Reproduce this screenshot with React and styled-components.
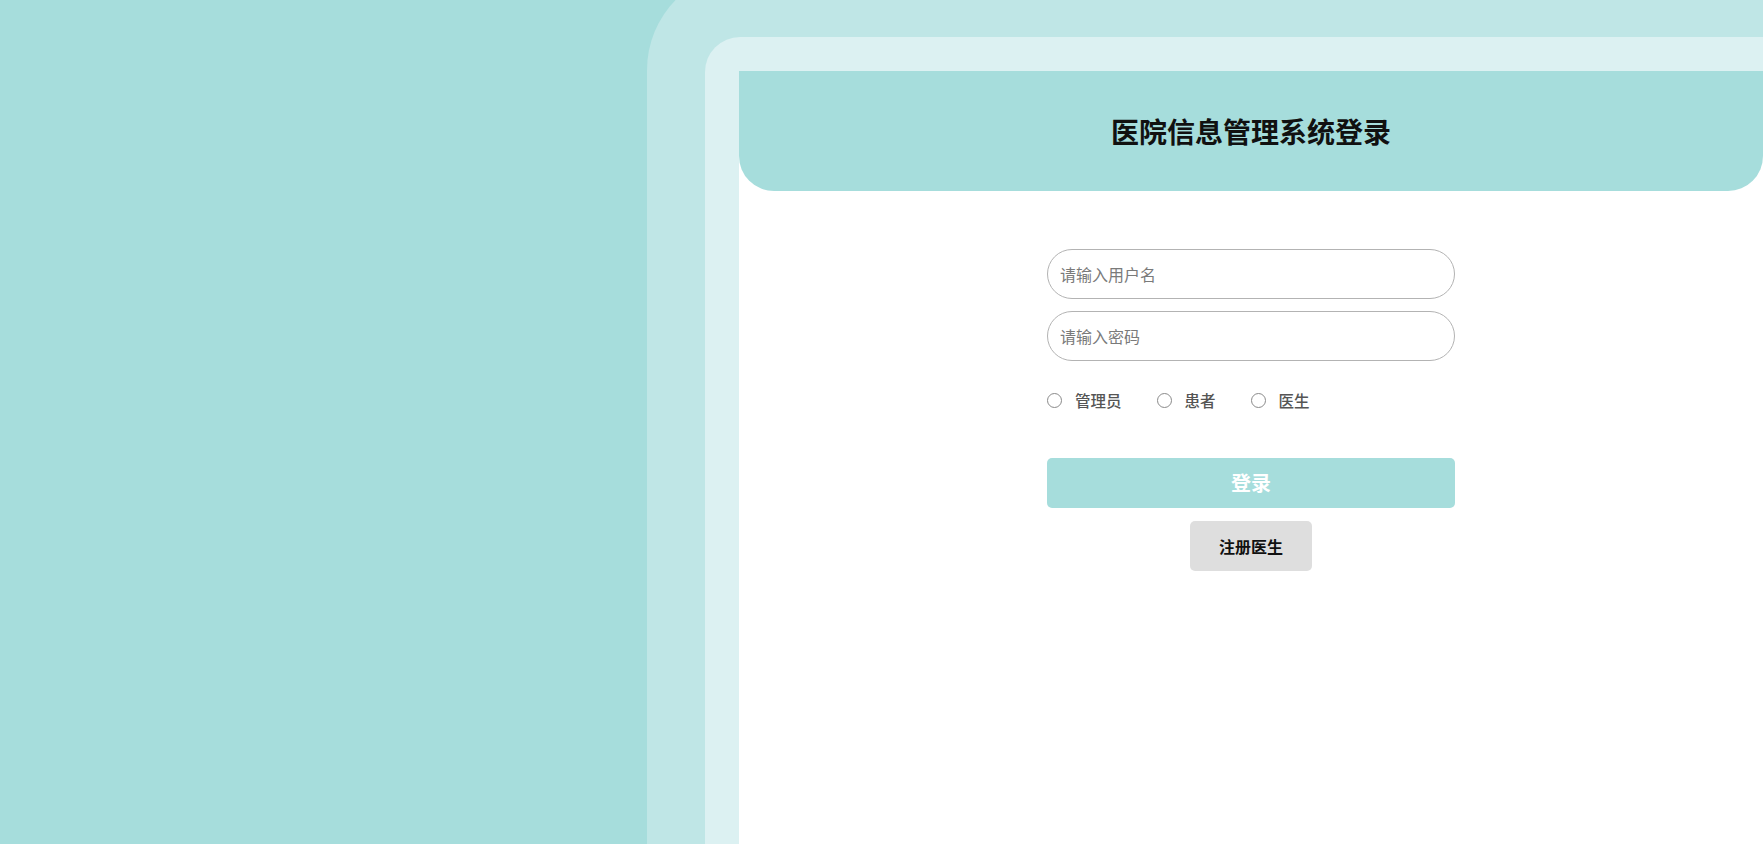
import React from 'react';
import styled, { createGlobalStyle } from 'styled-components';

const GlobalStyle = createGlobalStyle`
  html, body {
    margin: 0;
    height: 100%;
    overflow: hidden;
  }
  body {
    background: #a6dddc;
    font-family: "Noto Sans CJK SC", "Noto Sans", sans-serif;
  }
  * {
    box-sizing: border-box;
  }
`;

const Page = styled.div`
  display: grid;
  grid-template-columns: 647px 1fr;
  height: 100vh;
`;

const OuterBand = styled.div`
  margin-top: -30px;
  padding: 67px 0 0 58px;
  background: #bfe6e6;
  border-top-left-radius: 100px;
  display: flex;
`;

const InnerBand = styled.div`
  flex: 1;
  display: flex;
  padding: 34px 0 0 34px;
  background: #dcf1f2;
  border-top-left-radius: 35px;
`;

const Card = styled.div`
  flex: 1;
  background: #fff;
`;

const Header = styled.div`
  height: 120px;
  display: flex;
  align-items: center;
  justify-content: center;
  background: #a6dddc;
  border-radius: 0 0 35px 35px;
`;

const Title = styled.h1`
  margin: 0;
  font-size: 28px;
  font-weight: 700;
  color: #111;
`;

const Form = styled.form`
  width: 408px;
  margin: 58px auto 0;
  display: flex;
  flex-direction: column;
`;

const Field = styled.input`
  height: 50px;
  margin-bottom: 12px;
  padding: 0 12px;
  border: 1px solid #b3b3b3;
  border-radius: 25px;
  font-family: inherit;
  font-size: 16px;
  outline: none;
  &::placeholder {
    color: #7a7a7a;
  }
`;

const RoleRow = styled.div`
  display: flex;
  align-items: center;
  gap: 35px;
  margin-top: 16px;
  height: 22px;
`;

const RoleLabel = styled.label`
  display: flex;
  align-items: center;
  gap: 13px;
  font-size: 15.5px;
  font-weight: 500;
  color: #555;
`;

const Radio = styled.input`
  appearance: none;
  width: 15px;
  height: 15px;
  margin: 0;
  border: 1px solid #8a8a8a;
  border-radius: 50%;
  background: #fff;
`;

const LoginButton = styled.button`
  height: 50px;
  margin-top: 47px;
  padding-bottom: 3px;
  border: none;
  border-radius: 5px;
  background: #a6dddc;
  color: #fff;
  font-family: inherit;
  font-size: 20px;
  font-weight: 700;
`;

const RegisterButton = styled.button`
  align-self: center;
  height: 50px;
  margin-top: 13px;
  padding: 0 29px;
  border: none;
  border-radius: 5px;
  background: #dedede;
  color: #111;
  font-family: inherit;
  font-size: 16px;
  font-weight: 700;
`;

const roles = ["管理员", "患者", "医生"];

const App = () => {
    const [role, setRole] = React.useState("");

    return (
        <>
            <GlobalStyle />
            <Page>
                <div />
                <OuterBand>
                    <InnerBand>
                        <Card>
                            <Header>
                                <Title>医院信息管理系统登录</Title>
                            </Header>
                            <Form onSubmit={e => e.preventDefault()}>
                                <Field type="text" placeholder="请输入用户名" />
                                <Field type="password" placeholder="请输入密码" />
                                <RoleRow>
                                    {roles.map(r => (
                                        <RoleLabel key={r}>
                                            <Radio type="radio" name="role" checked={role === r} onChange={() => setRole(r)} />
                                            {r}
                                        </RoleLabel>
                                    ))}
                                </RoleRow>
                                <LoginButton type="submit">登录</LoginButton>
                                <RegisterButton type="button">注册医生</RegisterButton>
                            </Form>
                        </Card>
                    </InnerBand>
                </OuterBand>
            </Page>
        </>
    );
};

export default App;
